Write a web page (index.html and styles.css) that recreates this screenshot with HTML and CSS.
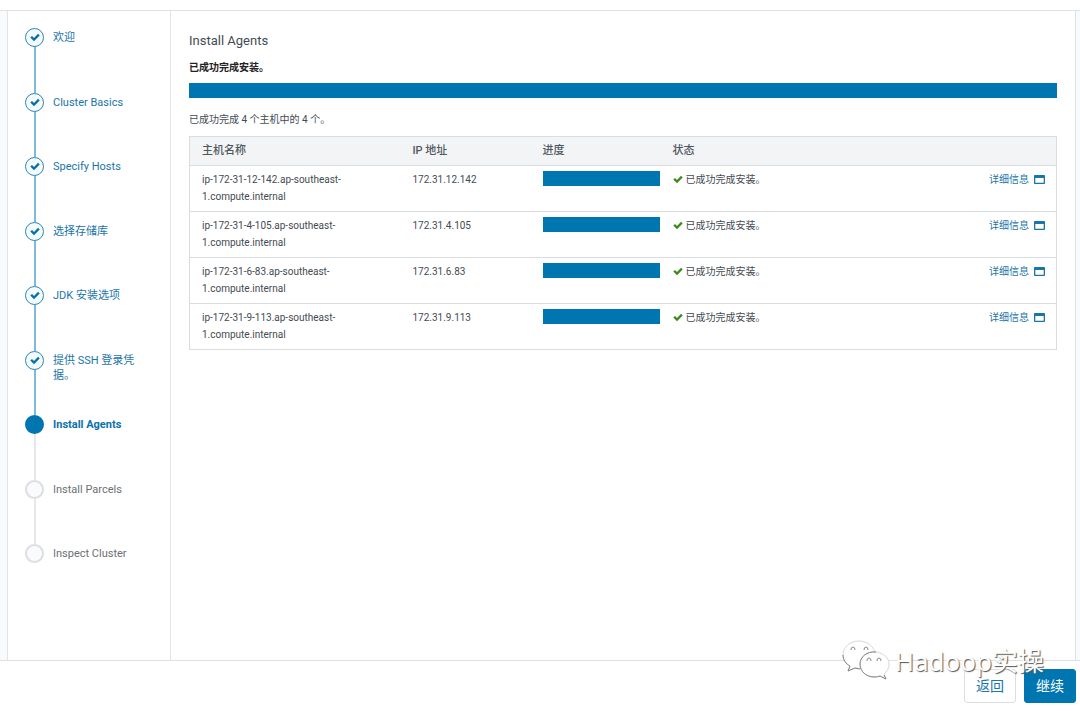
FILE: index.html
```html
<!DOCTYPE html>
<html lang="zh-CN">
<head>
<meta charset="utf-8">
<title>Install Agents</title>
<link rel="stylesheet" href="styles.css">
</head>
<body>
<svg class="defs" aria-hidden="true">
  <symbol id="check" viewBox="0 0 10 9"><path d="M0.3 4.6 2 2.9 4 4.9 8.1 0.8 9.7 2.4 4 8.2Z" fill="currentColor"/></symbol>
  <symbol id="window" viewBox="0 0 11 9"><path fill-rule="evenodd" d="M0.8 0H10.2Q11 0 11 0.8V8.2Q11 9 10.2 9H0.8Q0 9 0 8.2V0.8Q0 0 0.8 0ZM1.3 3V7.7H9.7V3Z" fill="currentColor"/></symbol>
</svg>
<div class="page">
  <div class="wizard">
    <nav class="sidebar" aria-label="步骤">
      <ol class="steps">
        <li class="step done"><span class="dot"><svg class="tick"><use href="#check"/></svg></span><a href="#">欢迎</a></li>
        <li class="step done"><span class="dot"><svg class="tick"><use href="#check"/></svg></span><a href="#">Cluster Basics</a></li>
        <li class="step done"><span class="dot"><svg class="tick"><use href="#check"/></svg></span><a href="#">Specify Hosts</a></li>
        <li class="step done"><span class="dot"><svg class="tick"><use href="#check"/></svg></span><a href="#">选择存储库</a></li>
        <li class="step done"><span class="dot"><svg class="tick"><use href="#check"/></svg></span><a href="#">JDK 安装选项</a></li>
        <li class="step done"><span class="dot"><svg class="tick"><use href="#check"/></svg></span><a href="#">提供 SSH 登录凭据。</a></li>
        <li class="step current" aria-current="step"><span class="dot"></span><span>Install Agents</span></li>
        <li class="step"><span class="dot"></span><span>Install Parcels</span></li>
        <li class="step"><span class="dot"></span><span>Inspect Cluster</span></li>
      </ol>
    </nav>
    <main class="content">
      <h1>Install Agents</h1>
      <p class="result">已成功完成安装。</p>
      <div class="bar" role="progressbar" aria-label="总进度" aria-valuenow="100"></div>
      <p class="summary">已成功完成 4 个主机中的 4 个。</p>
      <table class="hosts">
        <colgroup><col class="c-name"><col class="c-ip"><col class="c-progress"><col><col class="c-details"></colgroup>
        <thead><tr><th>主机名称</th><th>IP 地址</th><th>进度</th><th>状态</th><th></th></tr></thead>
        <tbody>
          <tr><td>ip-172-31-12-142.ap-southeast-1.compute.internal</td><td>172.31.12.142</td><td><div class="bar" role="progressbar" aria-label="进度" aria-valuenow="100"></div></td><td><svg class="ok"><use href="#check"/></svg>已成功完成安装。</td><td class="details"><a href="#">详细信息<svg class="win"><use href="#window"/></svg></a></td></tr>
          <tr><td>ip-172-31-4-105.ap-southeast-1.compute.internal</td><td>172.31.4.105</td><td><div class="bar" role="progressbar" aria-label="进度" aria-valuenow="100"></div></td><td><svg class="ok"><use href="#check"/></svg>已成功完成安装。</td><td class="details"><a href="#">详细信息<svg class="win"><use href="#window"/></svg></a></td></tr>
          <tr><td>ip-172-31-6-83.ap-southeast-1.compute.internal</td><td>172.31.6.83</td><td><div class="bar" role="progressbar" aria-label="进度" aria-valuenow="100"></div></td><td><svg class="ok"><use href="#check"/></svg>已成功完成安装。</td><td class="details"><a href="#">详细信息<svg class="win"><use href="#window"/></svg></a></td></tr>
          <tr><td>ip-172-31-9-113.ap-southeast-1.compute.internal</td><td>172.31.9.113</td><td><div class="bar" role="progressbar" aria-label="进度" aria-valuenow="100"></div></td><td><svg class="ok"><use href="#check"/></svg>已成功完成安装。</td><td class="details"><a href="#">详细信息<svg class="win"><use href="#window"/></svg></a></td></tr>
        </tbody>
      </table>
    </main>
  </div>
  <footer class="actions">
    <button type="button" class="btn">返回</button>
    <button type="button" class="btn primary">继续</button>
    <div class="watermark">
      <svg class="wechat" viewBox="0 0 48 42" aria-hidden="true">
        <path class="bubble" d="M17 1C8 1 1 7 1 15C1 20 4 24 8 26L6 31L13 28Q17 29 21 28C30 27 33 21 33 15C33 7 26 1 17 1Z"/>
        <path class="rim" d="M1 15C1 20 4 24 8 26L6 31L13 28L18 29"/>
        <path class="bubble" d="M32 12C24 12 18 17 18 24C18 32 25 37 32 37Q36 37 38 36L44 39L42 34C45 32 47 28 47 24C47 17 40 12 32 12Z"/>
        <path class="rim" d="M34 12C25 11 18 17 18 24C18 32 25 37 32 37Q36 37 38 36L44 39L42 35"/>
        <path class="eyes" d="M9 10Q9 7 11 7T13 10M22 10Q22 7 24 7T26 10M25 21Q25 18 27 18T29 21M35 21Q35 18 37 18T39 21"/>
      </svg>
      <span>Hadoop实操</span>
    </div>
  </footer>
</div>
</body>
</html>
```
FILE: styles.css
```css
* { box-sizing: border-box; }
body {
  margin: 0;
  background: #fff;
  color: #444b52;
  font-family: Roboto, "Noto Sans CJK SC", sans-serif;
  font-size: 10px;
  line-height: 17px;
}
h1, p, ol { margin: 0; padding: 0; }
a { color: #1a75a8; text-decoration: none; }
.defs { position: absolute; width: 0; height: 0; }
.page { display: flex; flex-direction: column; min-height: 100vh; padding-top: 10px; }
.wizard {
  flex: 1;
  display: flex;
  padding: 0 4px 0 7px;
  border: solid #dfe1e3;
  border-width: 1px 0;
  background: #f8fbfe;
}
.sidebar {
  flex: 0 0 164px;
  padding: 17px 35px 0 17px;
  background: #fff;
  border: solid #e2e4e6;
  border-width: 0 1px;
}
.steps { list-style: none; }
.step {
  position: relative;
  display: flex;
  gap: 9px;
  min-height: 65px;
  color: #6b7075;
  font-size: 11px;
  line-height: 15px;
}
.step:nth-child(even) { min-height: 64px; }
.step > :last-child { padding-top: 2px; }
.step:not(:last-child)::before {
  content: "";
  position: absolute;
  top: 18px;
  bottom: 0;
  left: 9px;
  width: 2px;
  background: #e6e7e9;
}
.step.done::before { background: #7dbbd9; }
.dot {
  flex: none;
  display: grid;
  place-items: center;
  width: 19px;
  height: 19px;
  border: 2px solid #dcdee1;
  border-radius: 50%;
  background: #fafbfc;
  z-index: 1;
}
.done .dot { border: 1px solid #2f86b5; background: #f3fbff; color: #0a6ea6; }
.current .dot { border-color: #0076b0; background: #0076b0; }
.current { color: #0a72aa; font-weight: 700; }
.tick { width: 10px; height: 9px; }
.content {
  flex: 1;
  padding: 20px 18px 0;
  background: #fff;
  border-right: 1px solid #dfe1e3;
}
h1 { font-size: 13px; font-weight: 400; line-height: 20px; }
.result { margin-top: 8px; color: #222; font-weight: 700; }
.bar { height: 15px; background: #0076b0; }
.result + .bar { margin-top: 7px; }
.summary { margin: 13px 0 8px; }
.hosts { width: 100%; table-layout: fixed; border: 1px solid #dadde0; border-collapse: collapse; }
.c-name { width: 211px; }
.c-ip, .c-progress { width: 130px; }
.c-details { width: 120px; }
th { padding: 5px 0 6px 12px; background: #f2f4f6; color: #50575e; text-align: left; font-weight: 500; font-size: 11px; }
td { padding: 5px 0 6px 12px; vertical-align: top; border-top: 1px solid #dadde0; }
td .bar { margin-right: 1px; }
.ok { width: 10px; height: 9px; margin-right: 3px; vertical-align: -1px; color: #3b8a1c; }
.details { padding-right: 11px; text-align: right; }
.win { width: 11px; height: 9px; margin-left: 5px; vertical-align: -1px; }
.actions {
  position: relative;
  display: flex;
  justify-content: flex-end;
  gap: 8px;
  padding: 8px 4px;
}
.btn {
  width: 52px;
  height: 34px;
  padding: 0;
  border: 1px solid #dcdfe2;
  border-radius: 3px;
  background: #fff;
  color: #1a75a8;
  font: inherit;
  font-size: 14px;
}
.primary { border-color: #0076b0; background: #0076b0; color: #fff; }
.watermark {
  position: absolute;
  top: -21px;
  right: 36px;
  display: flex;
  align-items: center;
  gap: 5px;
  color: #fff;
  font-family: "Noto Sans", "Noto Sans CJK SC", sans-serif;
  font-size: 26px;
  line-height: 42px;
  text-shadow: 1px 1px 1px #555;
  pointer-events: none;
}
.wechat { width: 48px; height: 42px; }
.bubble { fill: #fff; stroke: #d8d8d8; stroke-width: 1; }
.rim { fill: none; stroke: #858585; stroke-width: 1; }
.eyes { fill: none; stroke: #888; stroke-width: 1; }
```
